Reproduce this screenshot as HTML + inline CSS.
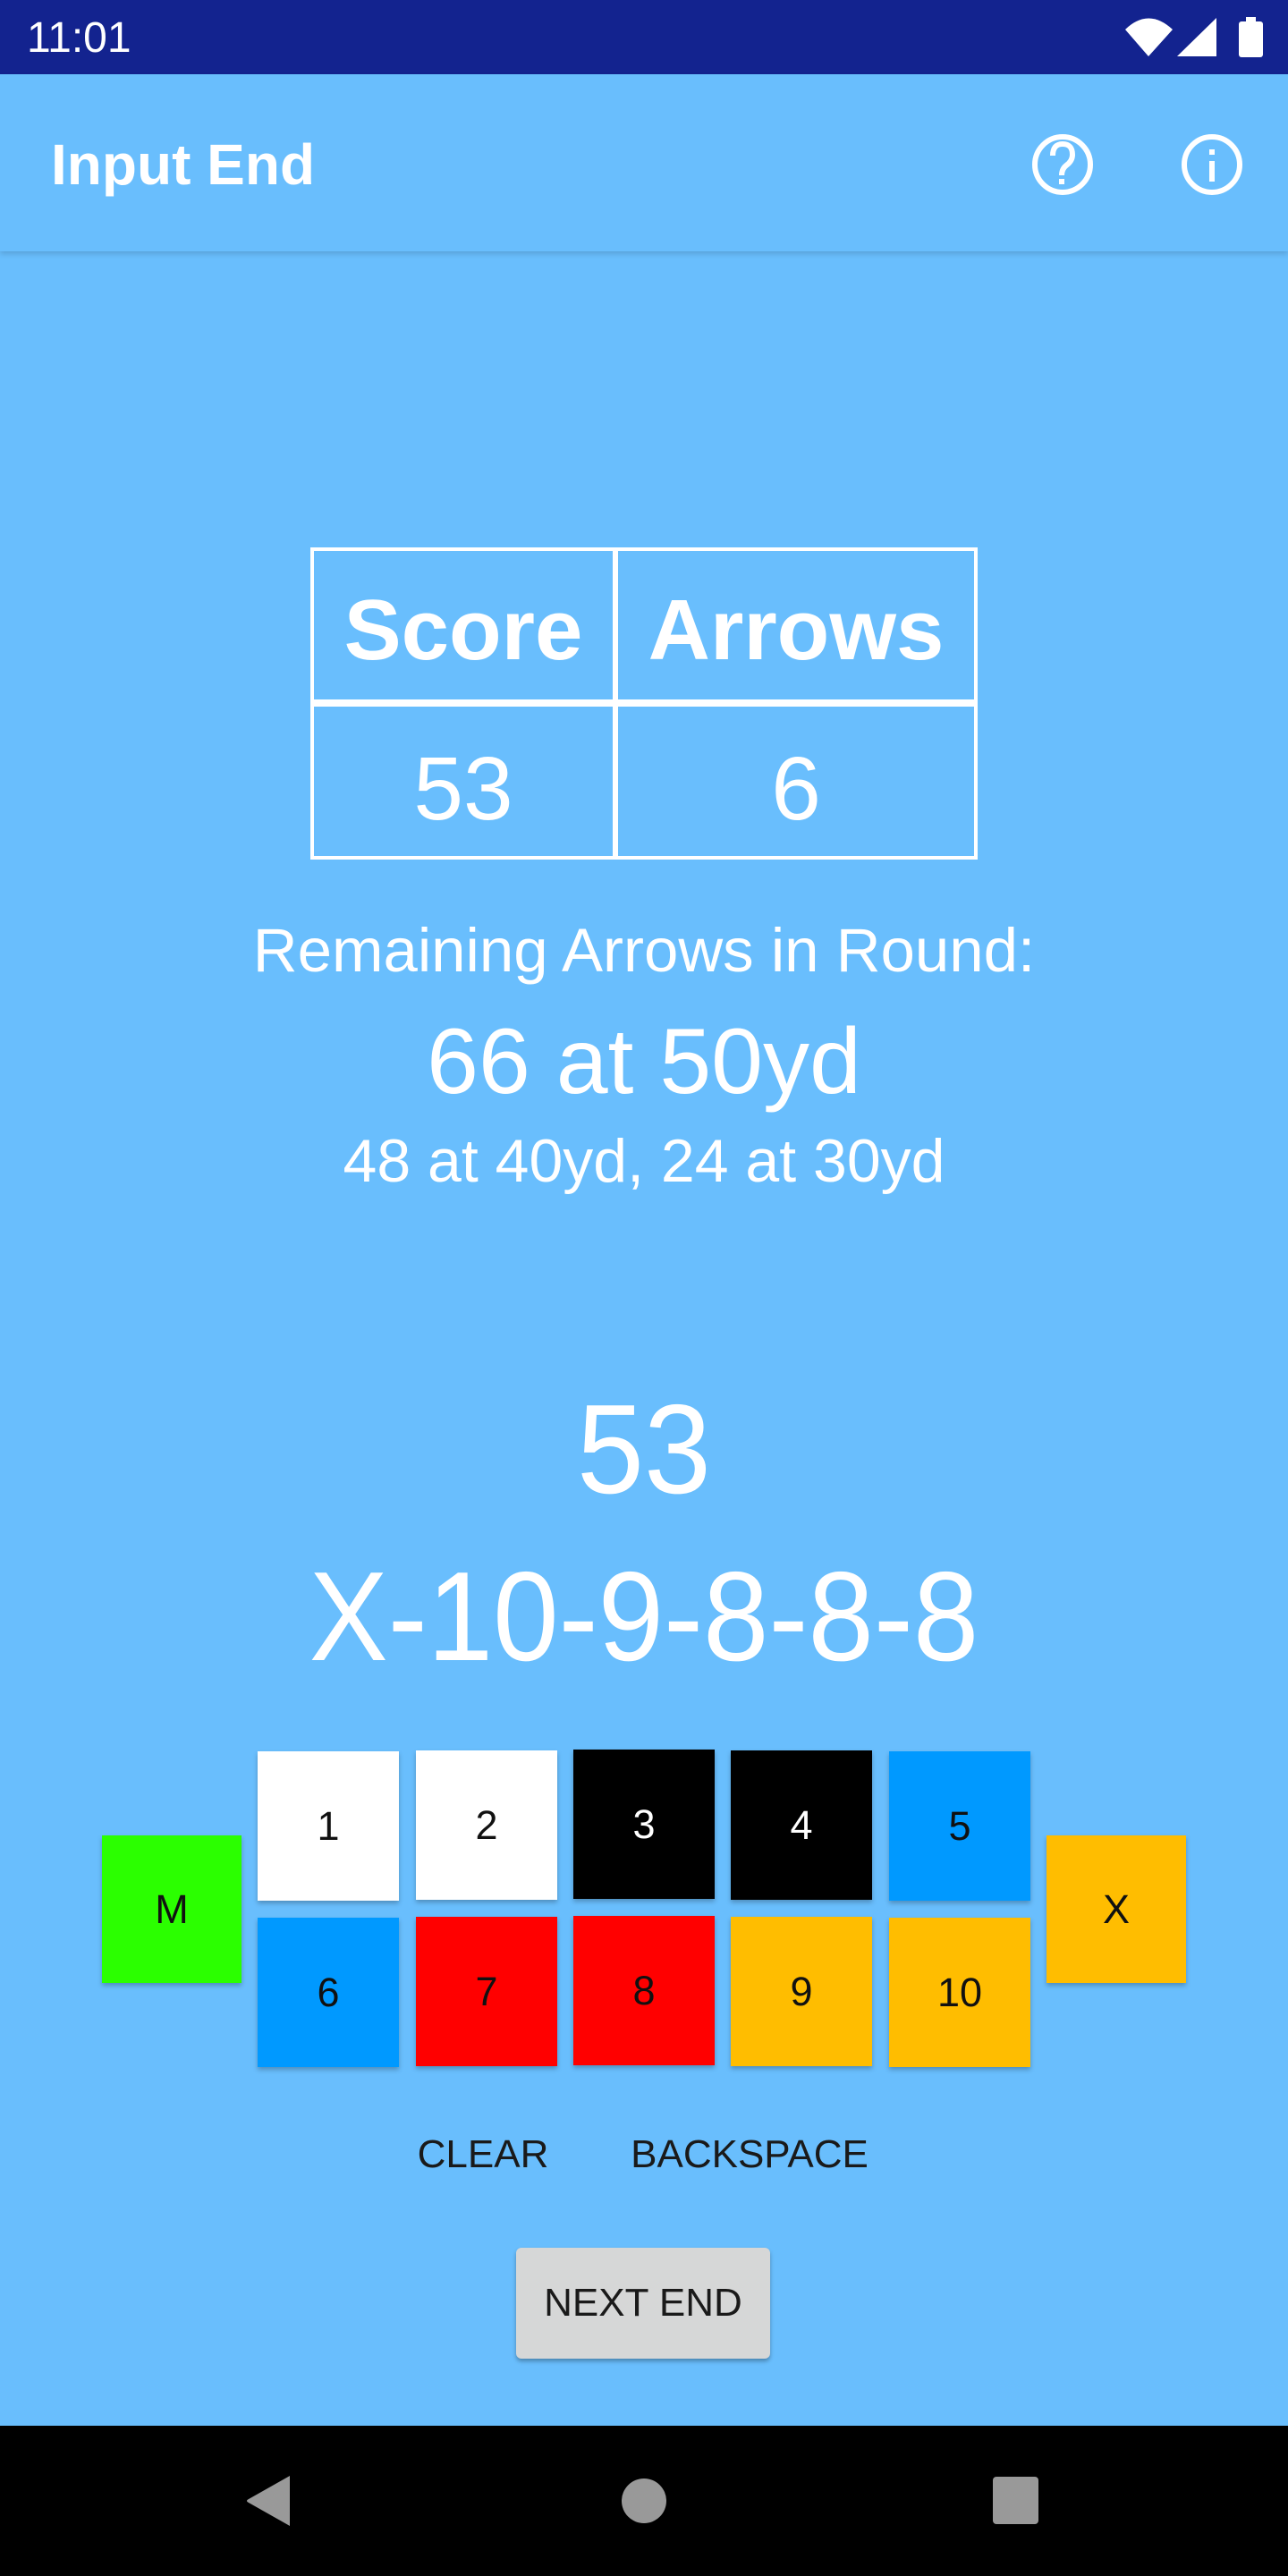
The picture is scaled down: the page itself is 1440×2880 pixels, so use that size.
<!DOCTYPE html>
<html><head><meta charset="utf-8"><style>
*{margin:0;padding:0;box-sizing:border-box}
body{width:1440px;height:2880px;background:#69befd;font-family:"Liberation Sans",sans-serif;position:relative;overflow:hidden}
.a{position:absolute}
.c{position:absolute;left:0;width:1440px;text-align:center;color:#fff;line-height:1}
.btn{position:absolute;width:158px;height:167px;display:flex;align-items:center;justify-content:center;font-size:45px;color:#111;box-shadow:0 3px 5px rgba(0,0,0,.25)}
</style></head><body>
<div class="a" style="left:0;top:0;width:1440px;height:83px;background:#13238f"></div>
<div class="a" style="left:30px;top:19px;color:#fff;font-size:48px;line-height:48px">11:01</div>
<svg class="a" style="left:0;top:0" width="1440" height="83">
<path d="M1258 33 Q1284 8 1311 33 L1284 63 Z" fill="#fff"/>
<path d="M1316 63 L1360 20 L1360 63 Z" fill="#fff"/>
<rect x="1393" y="19" width="11" height="6" fill="#fff"/>
<rect x="1385" y="24" width="27" height="40" rx="3" fill="#fff"/>
</svg>
<div class="a" style="left:0;top:83px;width:1440px;height:198px;background:#69befd;box-shadow:0 3px 6px rgba(0,0,0,.15)"></div>
<div class="a" style="left:57px;top:148px;color:#fff;font-size:64px;line-height:72px;font-weight:bold">Input End</div>
<svg class="a" style="left:0;top:83px" width="1440" height="198">
<circle cx="1188" cy="101" r="31" fill="none" stroke="#fff" stroke-width="6"/>
<path d="M1177 91 Q1177 78 1188 78 Q1199 78 1199 90 Q1199 97 1192 102 Q1187 106 1187 113" fill="none" stroke="#fff" stroke-width="6"/>
<rect x="1184" y="117" width="6" height="6" fill="#fff"/>
<circle cx="1355" cy="101" r="31" fill="none" stroke="#fff" stroke-width="6"/>
<rect x="1352" y="97" width="6" height="23" fill="#fff"/>
<rect x="1352" y="84" width="6" height="6" fill="#fff"/>
</svg>
<div class="a" style="left:347px;top:612px;width:746px;height:349px;border:4px solid #fff"></div>
<div class="a" style="left:685px;top:612px;width:6px;height:349px;background:#fff"></div>
<div class="a" style="left:347px;top:782px;width:746px;height:8px;background:#fff"></div>
<div class="a" style="left:351px;top:622px;width:334px;height:166px;display:flex;align-items:center;justify-content:center;color:#fff;font-size:96px;font-weight:bold">Score</div>
<div class="a" style="left:691px;top:622px;width:398px;height:166px;display:flex;align-items:center;justify-content:center;color:#fff;font-size:96px;font-weight:bold">Arrows</div>
<div class="a" style="left:351px;top:799px;width:334px;height:167px;display:flex;align-items:center;justify-content:center;color:#fff;font-size:100px">53</div>
<div class="a" style="left:691px;top:799px;width:398px;height:167px;display:flex;align-items:center;justify-content:center;color:#fff;font-size:100px">6</div>
<div class="c" style="top:1028px;font-size:69px">Remaining Arrows in Round:</div>
<div class="c" style="top:1135px;font-size:104px">66 at 50yd</div>
<div class="c" style="top:1264px;font-size:68px">48 at 40yd, 24 at 30yd</div>
<div class="c" style="top:1550px;font-size:142px;transform:scaleX(0.95)">53</div>
<div class="c" style="top:1737px;font-size:142px;transform:scaleX(0.93)">X-10-9-8-8-8</div>
<div class="btn" style="left:114px;top:2052px;background:#2bff00;height:165px;width:156px">M</div>
<div class="btn" style="left:288px;top:1958px;background:#fff">1</div>
<div class="btn" style="left:465px;top:1957px;background:#fff">2</div>
<div class="btn" style="left:641px;top:1956px;background:#000;color:#fff">3</div>
<div class="btn" style="left:817px;top:1957px;background:#000;color:#fff">4</div>
<div class="btn" style="left:994px;top:1958px;background:#0099ff">5</div>
<div class="btn" style="left:1170px;top:2052px;background:#ffbd00;height:165px;width:156px">X</div>
<div class="btn" style="left:288px;top:2144px;background:#0099ff">6</div>
<div class="btn" style="left:465px;top:2143px;background:#f00">7</div>
<div class="btn" style="left:641px;top:2142px;background:#f00">8</div>
<div class="btn" style="left:817px;top:2143px;background:#ffbd00">9</div>
<div class="btn" style="left:994px;top:2144px;background:#ffbd00">10</div>
<div class="a" style="left:440px;top:2384px;width:200px;text-align:center;font-size:44px;color:#1a1a1a">CLEAR</div>
<div class="a" style="left:688px;top:2384px;width:300px;text-align:center;font-size:44px;color:#1a1a1a">BACKSPACE</div>
<div class="a" style="left:577px;top:2513px;width:284px;height:124px;background:#d6d7d7;border-radius:6px;box-shadow:0 3px 5px rgba(0,0,0,.3);display:flex;align-items:center;justify-content:center;font-size:44px;color:#1a1a1a">NEXT END</div>
<div class="a" style="left:0;top:2712px;width:1440px;height:168px;background:#000"></div>
<svg class="a" style="left:0;top:2712px" width="1440" height="168">
<path d="M324 56 L324 112 L278 86 Q274 84 278 82 Z" fill="#999"/>
<circle cx="720" cy="84" r="25" fill="#999"/>
<rect x="1110" y="57" width="51" height="53" rx="4" fill="#999"/>
</svg>
</body></html>
